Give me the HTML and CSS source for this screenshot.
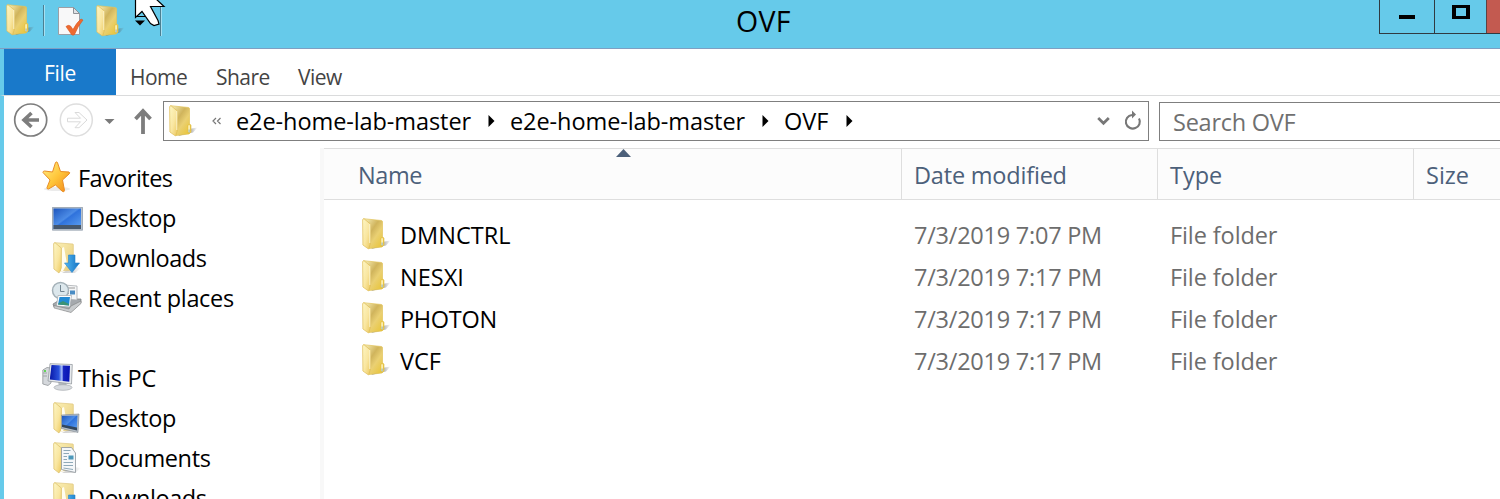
FILE: index.html
```html
<!DOCTYPE html>
<html lang="en">
<head>
<meta charset="utf-8">
<title>OVF</title>
<link rel="stylesheet" href="styles.css">
</head>
<body>
<svg class="defs" width="0" height="0" aria-hidden="true">
  <defs>
    <linearGradient id="g-back" x1="0" y1="0" x2="1" y2="1"><stop offset="0" stop-color="#fbf3bd"/><stop offset=".4" stop-color="#d0b45c"/><stop offset=".6" stop-color="#ead073"/><stop offset="1" stop-color="#e8c22c"/></linearGradient>
    <linearGradient id="g-flap" x1="0" y1="0" x2="1" y2="1"><stop offset="0" stop-color="#fdf6c4"/><stop offset=".55" stop-color="#f9e6a0"/><stop offset="1" stop-color="#ecc95e"/></linearGradient>
    <linearGradient id="g-plain" x1="0" y1="0" x2="1" y2="1"><stop offset="0" stop-color="#fbf0b5"/><stop offset="1" stop-color="#e8cc7c"/></linearGradient>
    <linearGradient id="g-shade" x1="0" y1="0" x2="1" y2="0"><stop offset="0" stop-color="#555" stop-opacity=".7"/><stop offset=".6" stop-color="#555" stop-opacity=".5"/><stop offset="1" stop-color="#555" stop-opacity="0"/></linearGradient>
    <linearGradient id="g-blue" x1="0" y1="0" x2="1" y2="1"><stop offset="0" stop-color="#1d55bd"/><stop offset=".45" stop-color="#4c8ce6"/><stop offset=".5" stop-color="#2f72dc"/><stop offset="1" stop-color="#5fa3f4"/></linearGradient>
    <linearGradient id="g-navy" x1="0" y1="0" x2="1" y2="0"><stop offset="0" stop-color="#0817a8"/><stop offset=".45" stop-color="#2a52dd"/><stop offset=".6" stop-color="#a9c0fa"/><stop offset=".68" stop-color="#1523c0"/><stop offset="1" stop-color="#0613b4"/></linearGradient>
    <linearGradient id="g-star" x1="0" y1="0" x2="1" y2="1"><stop offset="0" stop-color="#fff08a"/><stop offset=".5" stop-color="#ffc63a"/><stop offset="1" stop-color="#f08518"/></linearGradient>
    <linearGradient id="g-arrow" x1="0" y1="0" x2="1" y2="0"><stop offset="0" stop-color="#55b8f0"/><stop offset="1" stop-color="#1272c4"/></linearGradient>
    <symbol id="folder" viewBox="0 0 30 32">
      <path d="M20 24L28.500 22.500L24 27.500L9 31Z" fill="url(#g-shade)"/>
      <path d="M1.500 .7L19.500 2.500Q20.500 2.700 20.500 4V19L22 20V27L20 29L7 30.500V6Z" fill="url(#g-back)" stroke="#e3c45c" stroke-width=".7"/>
      <path d="M.6 1.500L2 .7L8.300 6V26L6.500 31L.9 27Z" fill="url(#g-flap)" stroke="#dfbd57" stroke-width=".7"/>
      <path d="M7.800 6V25" stroke="#fffbe0" stroke-width=".8"/>
      <rect x="18.700" y="19.500" width="2.800" height="8.500" rx="1.400" fill="#fbeeb0" stroke="#e3bd36" stroke-width=".8"/>
      <path d="M20.100 24.500V27.500" stroke="#7fa7bd" stroke-width=".9"/>
    </symbol>
    <symbol id="folder-open" viewBox="0 0 30 32">
      <path d="M20 25L28 26L22 31L9 31Z" fill="url(#g-shade)" opacity=".4"/>
      <path d="M1.500 .7L20 2Q20.300 2.200 20.300 3V28L7 29Z" fill="url(#g-plain)" stroke="#dfc77c" stroke-width=".7"/>
      <path d="M9 6L11 5L14 22L10 29H8Z" fill="#fffdf0"/>
      <path d="M.6 1.500L2 .7L8.300 6V26L6 31L.9 27Z" fill="url(#g-flap)" stroke="#dbbf68" stroke-width=".7"/>
    </symbol>
  </defs>
</svg>

<div class="window">
  <header class="titlebar">
    <div class="quick">
      <svg class="folder" width="30" height="32"><use href="#folder"/></svg>
      <i class="rule"></i>
      <svg class="props" width="28" height="30" viewBox="0 0 28 30">
        <path d="M1.500 .5H16.500L22.500 6.500V27.500H1.500Z" fill="#f8f8f9" stroke="#9c9fa5"/>
        <path d="M16.500 .5V6.500H22.500Z" fill="#dfe2e6" stroke="#8d9197"/>
        <path d="M9 19.500Q11.500 17.500 13.500 19L16 22.500Q19.500 15.500 24 12L26 13Q21 19 17.500 27.500Q16 29 14.500 27.500Z" fill="#ee6a31" stroke="#d7561f" stroke-width=".6"/>
      </svg>
      <svg class="folder two" width="30" height="32"><use href="#folder"/></svg>
      <svg class="more" width="12" height="10" viewBox="0 0 12 10"><path d="M0 .5H10" stroke="#000"/><path d="M0 4.500H10L5 9.500Z"/></svg>
      <i class="rule last"></i>
      <svg class="cursor" width="34" height="28" viewBox="0 0 34 28"><path d="M1.500 -2V17.500L8 11.500L16.500 23.500L20 25.500L25 24L24 20.500L16.500 6.500H30L21 -2Z" fill="#fff" stroke="#000" stroke-width="1.200"/></svg>
    </div>
    <h1 class="title">OVF</h1>
    <div class="controls">
      <span class="ctl min"><i></i></span><span class="ctl max"><i></i></span><span class="ctl close"></span>
    </div>
  </header>

  <nav class="ribbon">
    <span class="file">File</span><span class="tab home">Home</span><span class="tab share">Share</span><span class="tab view">View</span>
  </nav>

  <div class="navbar">
    <svg class="arrows" width="140" height="40" viewBox="0 0 140 40" fill="none">
      <circle cx="26.700" cy="19" r="16" stroke="#7d7d7d" stroke-width="1.700"/>
      <path d="M35 19H20M27.500 12L20 19L27.500 26" stroke="#7d7d7d" stroke-width="3.600"/>
      <circle cx="72.300" cy="19" r="16" stroke="#dedede" stroke-width="1.500"/>
      <path d="M63.500 17.200H76.500L71 11.500H75L83 19L75 26.700H71L76.500 20.800H63.500Z" stroke="#dadada"/>
      <path d="M100.500 18H110.500L105.500 23Z" fill="#7a7a7a"/>
      <path d="M139 33V10M131.500 18L139 10L146.500 18" stroke="#7d7d7d" stroke-width="3.800"/>
    </svg>
    <div class="address">
      <svg class="folder" width="30" height="32"><use href="#folder"/></svg>
      <svg class="chev" width="10" height="8" viewBox="0 0 10 8"><path d="M4 1L1 4L4 7M8.500 1L5.500 4L8.500 7" fill="none" stroke="#777" stroke-width="1.200"/></svg>
      <span class="crumb">e2e-home-lab-master</span>
      <svg class="sep" width="7" height="12" viewBox="0 0 7 12"><path d="M.5 0L6.500 6L.5 12Z"/></svg>
      <span class="crumb">e2e-home-lab-master</span>
      <svg class="sep" width="7" height="12" viewBox="0 0 7 12"><path d="M.5 0L6.500 6L.5 12Z"/></svg>
      <span class="crumb ovf">OVF</span>
      <svg class="sep" width="7" height="12" viewBox="0 0 7 12"><path d="M.5 0L6.500 6L.5 12Z"/></svg>
      <svg class="tools" width="46" height="20" viewBox="0 0 46 20" fill="none" stroke="#777"><path d="M1.200 7L6.500 12.300L11.800 7" stroke-width="2.700"/><path d="M42 7.500A7 6.800 0 1 1 35 4" stroke-width="2.100"/><path d="M35 -.5L39 3.500L35 7.500Z" fill="#777" stroke="none"/></svg>
    </div>
    <div class="search"><span>Search OVF</span></div>
  </div>

  <main class="content">
    <aside class="sidebar">
      <div class="root"><svg width="30" height="32" viewBox="0 0 30 32"><ellipse cx="15" cy="27" rx="13" ry="2" fill="#ddd" opacity=".6"/><path d="M13.500 .5Q15 -1 15.600 1L18.500 9.500L27 10Q28.500 10.700 27 12L20.500 18L22.500 28.500Q22 30.500 20.500 29.500L13.500 23L6.500 27Q4.500 27 5 25.500L8 18L1 10.500Q1 9 2.500 9L10.500 10Z" fill="url(#g-star)" stroke="#e98d24"/></svg><span class="t-fav">Favorites</span></div>
      <div class="item"><svg width="32" height="32" viewBox="0 0 32 32"><path d="M1 5H32V28.500H1Z" fill="#b9c3cd"/><path d="M2.500 6.500H30V27H2.500Z" fill="url(#g-blue)"/><path d="M2.500 23H30V27H2.500Z" fill="#46586d"/><path d="M1.500 28V5.500H31.500V28Z" fill="none" stroke="#a3adb8"/></svg><span class="t-desk">Desktop</span></div>
      <div class="item"><svg width="32" height="32" viewBox="0 0 32 32"><use href="#folder-open" x="2" y="0" width="30" height="32"/><path d="M17.500 13H24V21H28.500L21 30.500L13.500 21H17.500Z" fill="url(#g-arrow)" stroke="#2583cb" stroke-width=".6"/></svg><span class="t-down">Downloads</span></div>
      <div class="item"><svg width="32" height="32" viewBox="0 0 32 32"><path d="M2 22L10 17H30V21L20 30L3 25Z" fill="#a5a9ad" stroke="#777b7f" stroke-width=".7"/><path d="M13 3L26 4V18L13 17Z" fill="#f5f6f7" stroke="#a9adb1" stroke-width=".8"/><path d="M15 6H24M15 9H18M15 11.500H18" stroke="#999"/><rect x="19" y="8.500" width="5" height="4" fill="#4a8cc4"/><circle cx="9.500" cy="8.500" r="8" fill="#dce7ec" stroke="#a4b1b8" stroke-width="1.500"/><path d="M9.500 3V9.500H13.500" fill="none" stroke="#738591"/><path d="M7 13.500H20.500L19 25L5.500 24Z" fill="#fff" stroke="#a4a8ac" stroke-width=".7"/><path d="M8.500 15H19L18 23.500L7 22.500Z" fill="#238bd4"/><path d="M7.300 21.500L12 19L18 22V23.500L7 22.500Z" fill="#3b9275"/><path d="M20 24L30 19V21.500L20 30.500L3 26V23.500L18 27Z" fill="#c9ccce" stroke="#777" stroke-width=".5"/></svg><span class="t-recent">Recent places</span></div>
      <div class="root pc"><svg width="32" height="32" viewBox="0 0 32 32"><path d="M.8 8L5 5.500L9 6V21L6 23.500L.8 22Z" fill="#d5d8dc" stroke="#85898e" stroke-width=".7"/><path d="M1 11H5M1 14H5" stroke="#a0a4a8"/><circle cx="3" cy="9" r="1" fill="#39d52a"/><path d="M16 19H24L25 25H17Z" fill="#b7bcc2"/><ellipse cx="21" cy="25.500" rx="9" ry="2.800" fill="#d7dade" stroke="#a5a9ae" stroke-width=".7"/><path d="M8 1.700L30.300 2.500L29.500 22L6 19Z" fill="#e6e9ec" stroke="#8b9096" stroke-width=".7"/><path d="M9.500 3L28 3.800L27.300 19.700L7.800 17.500Z" fill="url(#g-navy)"/></svg><span class="t-pc">This PC</span></div>
      <div class="item"><svg width="32" height="32" viewBox="0 0 32 32"><use href="#folder-open" x="2" y="0" width="30" height="32"/><path d="M10.500 13L28 12L27 30.500L10.500 26.500Z" fill="#b5bdc5" stroke="#7f8890" stroke-width=".6"/><path d="M11 14L26.500 13.500L25.800 28L11 24.500Z" fill="url(#g-blue)"/><path d="M11 22.500L26 25.500V28.500L11 25Z" fill="#33475d"/></svg><span class="t-desk">Desktop</span></div>
      <div class="item"><svg width="32" height="32" viewBox="0 0 32 32"><use href="#folder-open" x="2" y="0" width="30" height="32"/><path d="M10.500 5.500H20.500L24.500 11V30.500L10.500 27.500Z" fill="#f5f7f9" stroke="#8d949b" stroke-width=".8"/><path d="M12.500 8.500H19.500M12.500 11.500H18M12.500 14.500H16M12.500 17.500H16M12.500 20.500H22M12.500 23.500H22M12.500 26L22 27.500" stroke="#8fa9b8"/><rect x="17.500" y="13.500" width="5" height="4" fill="#4c98ba"/></svg><span class="t-doc">Documents</span></div>
      <div class="item"><svg width="32" height="32" viewBox="0 0 32 32"><use href="#folder-open" x="2" y="0" width="30" height="32"/><path d="M17.500 13H24V21H28.500L21 30.500L13.500 21H17.500Z" fill="url(#g-arrow)" stroke="#2583cb" stroke-width=".6"/></svg><span class="t-down">Downloads</span></div>
    </aside>

    <section class="list">
      <div class="cols">
        <span class="c-name">Name</span><span class="c-date">Date modified</span><span class="c-type">Type</span><span class="c-size">Size</span>
        <svg class="sort" width="16" height="8" viewBox="0 0 16 8"><path d="M0 8L7.500 0L15 8Z" fill="#4c607a"/></svg>
      </div>
      <div class="rows">
        <div class="row"><svg class="folder" width="30" height="32"><use href="#folder"/></svg><span class="name">DMNCTRL</span><span class="date">7/3/2019 7:07 PM</span><span class="type">File folder</span></div>
        <div class="row"><svg class="folder" width="30" height="32"><use href="#folder"/></svg><span class="name">NESXI</span><span class="date">7/3/2019 7:17 PM</span><span class="type">File folder</span></div>
        <div class="row"><svg class="folder" width="30" height="32"><use href="#folder"/></svg><span class="name photon">PHOTON</span><span class="date">7/3/2019 7:17 PM</span><span class="type">File folder</span></div>
        <div class="row"><svg class="folder" width="30" height="32"><use href="#folder"/></svg><span class="name">VCF</span><span class="date">7/3/2019 7:17 PM</span><span class="type">File folder</span></div>
      </div>
    </section>
  </main>
</div>
</body>
</html>
```
FILE: styles.css
```css
* { box-sizing: border-box; }
body { margin: 0; width: 1500px; height: 499px; overflow: hidden; background: #fff; color: #000; font: 23.5px "Open Sans", "Noto Sans", sans-serif; }
svg { display: block; flex: none; overflow: visible; }
span { white-space: nowrap; }
.defs { position: absolute; }
.window { display: flex; flex-direction: column; height: 499px; overflow: hidden; }

.titlebar { display: flex; flex: none; height: 49px; background: #66caea; border-bottom: 1px solid #7f9fc2; }
.quick { position: relative; display: flex; align-items: flex-start; width: 700px; padding: 4px 0 0 6px; }
.rule { width: 1px; height: 31px; margin: 1px 0 0 7px; background: #4b7f92; box-shadow: 1px 0 #a5e0f2; }
.props { margin: 3px 0 0 13px; }
.two { margin: 1px 0 0 11px; }
.more { margin: 12px 0 0 9px; }
.rule.last { margin-left: 13px; }
.cursor { position: absolute; left: 134px; top: 0; }
.title { margin: 0; width: 679px; padding-left: 36px; font-size: 28.5px; font-weight: 400; line-height: 43px; letter-spacing: .3px; }
.controls { display: flex; width: 121px; height: 34px; border: solid #303a40; border-width: 0 0 1px 1px; }
.ctl { display: flex; justify-content: center; }
.min { width: 54px; }
.min i { width: 16px; height: 4px; margin-top: 15px; background: #000; }
.max { width: 52px; border-left: 1px solid #303a40; }
.max i { width: 18px; height: 14px; margin: 5px 0 0 0; border: solid #000; border-width: 3px 4px; }
.close { width: 14px; background: #c35a50; border-left: 1px solid #5c4343; }

.ribbon { display: flex; flex: none; height: 47px; border-left: 4px solid #66caea; border-bottom: 1px solid #dadbdc; font-size: 21px; letter-spacing: -.55px; color: #444; line-height: 57px; }
.file { width: 112px; height: 46px; padding-left: 40px; background: #1979ca; color: #fff; line-height: 49px; letter-spacing: -.3px; }
.home { width: 86px; padding-left: 14px; }
.share { width: 82px; padding-left: 14px; }
.view { padding-left: 14px; }

.navbar { display: flex; flex: none; height: 52px; padding-top: 5px; border-left: 4px solid #66caea; }
.arrows { width: 140px; margin-right: 19px; }
.address { display: flex; align-items: center; width: 986px; height: 40px; border: 1px solid #7f7f7f; padding-left: 5px; }
.address .folder { margin-top: -1px; }
.chev { margin: 0 14px 0 13px; }
.crumb { width: 236px; line-height: 38px; letter-spacing: -.08px; }
.sep { margin: 0 15px 0 16px; }
.ovf { width: 46px; }
.tools { margin-left: auto; margin-right: 5px; }
.search { width: 341px; height: 39px; margin: 1px 0 0 10px; padding-left: 13px; border: 1px solid #7f7f7f; border-right: 0; color: #707070; line-height: 38px; letter-spacing: -.25px; }

.content { display: flex; flex: 1; min-height: 0; border-left: 4px solid #66caea; }
.sidebar { width: 320px; padding-top: 10px; border-right: 4px solid #f8f8f8; }
.root, .item { display: flex; align-items: center; height: 40px; line-height: 40px; }
.root { padding-left: 38px; }
.root span { margin-left: 6px; }
.item { padding-left: 47px; }
.item span { margin-left: 5px; }
.t-fav { letter-spacing: -.55px; }
.t-desk { letter-spacing: -.4px; }
.t-down { letter-spacing: -.45px; }
.t-recent { letter-spacing: -.33px; }
.t-doc { letter-spacing: -.37px; }
.t-pc { letter-spacing: -.2px; }
.pc { margin-top: 40px; }
.root.pc span { margin-left: 4px; }

.list { flex: 1; }
.cols { position: relative; display: flex; height: 52px; border: solid #dedede; border-width: 1px 0; background: #fcfcfc; color: #4c607a; line-height: 52px; }
.cols span { border-right: 1px solid #dedede; }
.c-name { width: 578px; padding-left: 34px; letter-spacing: -.4px; }
.c-date { width: 256px; padding-left: 12px; letter-spacing: -.2px; }
.c-type { width: 256px; padding-left: 12px; }
.cols .c-size { width: 86px; padding-left: 12px; border-right: 0; }
.sort { position: absolute; left: 292px; top: 0; }
.rows { padding-top: 15px; }
.row { display: flex; align-items: center; height: 42px; padding-left: 38px; line-height: 40px; }
.row .folder { margin-top: -4px; }
.row span { height: 42px; }
.name { width: 522px; padding-left: 8px; }
.photon { letter-spacing: -.3px; }
.date { width: 256px; color: #6d6d6d; letter-spacing: -.24px; }
.type { color: #6d6d6d; letter-spacing: -.1px; }
```
